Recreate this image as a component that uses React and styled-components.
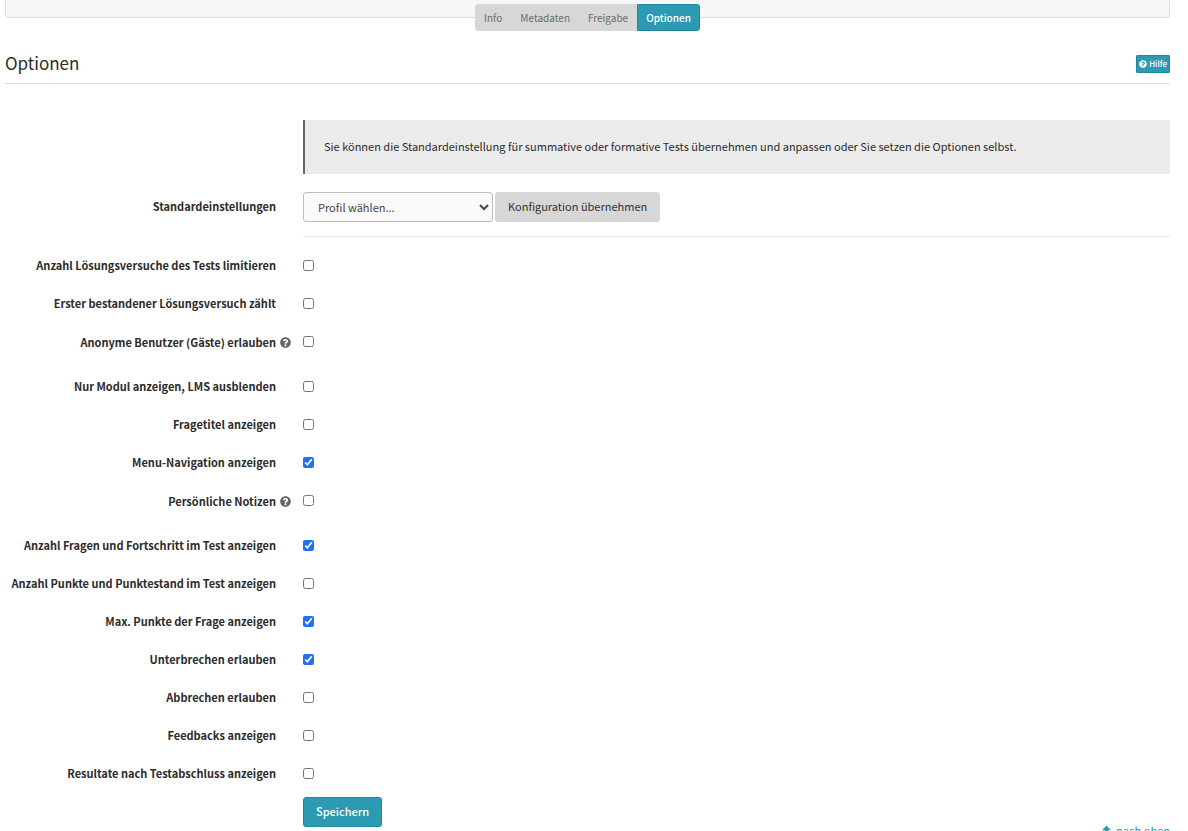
import React from 'react';
import styled, { createGlobalStyle, css } from 'styled-components';
import { FaQuestionCircle } from 'react-icons/fa';

const GlobalStyle = createGlobalStyle`
  *, *::before, *::after { box-sizing: border-box; }
  html { scrollbar-width: none; }
  body {
    margin: 0;
    background: #fff;
    color: #2b2b2b;
    font-family: "Noto Sans CJK SC", "Source Sans Pro", "Liberation Sans", sans-serif;
    font-size: 11px;
    line-height: 18px;
  }
  button, input, select { font: inherit; margin: 0; }
`;

const Page = styled.div`
  padding: 0 18px 16px 5px;
`;

const Panel = styled.div`
  height: 18px;
  background: #f7f7f7;
  border: 1px solid #dedede;
  border-top: 0;
  border-radius: 0 0 4px 4px;
`;

const Tabs = styled.nav`
  display: flex;
  justify-content: center;
  margin-top: -14px;
`;

const Tab = styled.button`
  height: 27px;
  padding: 0 8px;
  border: 1px solid #d7d7d7;
  background: #d7d7d7;
  color: #6b6b6b;
  font-size: 10px;
  line-height: 15px;
  &:first-child { border-radius: 3px 0 0 3px; }
  &:last-child { border-radius: 0 3px 3px 0; }
  ${({ $active }) => $active && css`
    background: #2c9ab3;
    border-color: #22869d;
    color: #fff;
    font-weight: 500;
  `}
`;

const Header = styled.header`
  display: flex;
  justify-content: space-between;
  align-items: center;
  margin-top: 13px;
  height: 40px;
  border-bottom: 1px solid #dedede;
`;

const Title = styled.h1`
  margin: 0;
  padding-bottom: 2px;
  font-size: 17px;
  font-weight: 400;
  line-height: 24px;
`;

const HelpButton = styled.button`
  display: flex;
  align-items: center;
  gap: 2px;
  height: 18px;
  padding: 0 2px;
  border: 1px solid #22869d;
  border-radius: 1px;
  background: #2c9ab3;
  color: #fff;
  font-size: 8px;
  font-weight: 500;
  line-height: 12px;
`;

const Form = styled.form`
  margin-top: 36px;
`;

const Row = styled.div`
  display: grid;
  grid-template-columns: 298px 1fr;
`;

const Field = styled.div`
  grid-column: 2;
`;

const Notice = styled.p`
  margin: 0 0 18px;
  padding: 17px 19px 19px;
  border-left: 2px solid #666;
  background: #ebebeb;
`;

const LabelCell = styled.div`
  display: flex;
  justify-content: flex-end;
  align-items: center;
  gap: 4px;
  height: ${({ $help }) => ($help ? 30 : 28)}px;
  padding-right: ${({ $help }) => ($help ? 12 : 27)}px;
  font-weight: bold;
  white-space: nowrap;
`;

const HelpIcon = styled.button`
  display: flex;
  padding: 0;
  border: 0;
  background: none;
  color: #666;
  font-size: 11px;
`;

const Controls = styled.div`
  display: flex;
  gap: 2px;
  padding-bottom: 14px;
  border-bottom: 1px solid #ebebeb;
`;

const Select = styled.select`
  width: 190px;
  height: 30px;
  padding: 0 10px;
  border: 1px solid #bdbdbd;
  border-radius: 3px;
  background: #fafafa;
  color: #444;
`;

const Button = styled.button`
  height: 30px;
  padding: 0 12px 2px;
  border: 1px solid ${({ $primary }) => ($primary ? '#22869d' : '#d7d7d7')};
  border-radius: 3px;
  background: ${({ $primary }) => ($primary ? '#2c9ab3' : '#d7d7d7')};
  color: ${({ $primary }) => ($primary ? '#fff' : '#333')};
  font-weight: ${({ $primary }) => ($primary ? 500 : 400)};
`;

const Options = styled.div`
  margin-top: 14px;
`;

const OptionRow = styled(Row)`
  height: ${({ $help }) => ($help ? 45 : 38)}px;
  align-items: start;
`;

const CheckCell = styled.div`
  display: flex;
  align-items: center;
  height: 28px;
`;

const Checkbox = styled.input`
  width: 11px;
  height: 11px;
  accent-color: #2470f5;
`;

const Footer = styled.footer`
  display: flex;
  justify-content: flex-end;
  margin-top: -6px;
`;

const TopLink = styled.a`
  display: flex;
  align-items: center;
  gap: 5px;
  color: #2c9ab3;
  text-decoration: none;
`;

const options = [
  { id: 'limit', label: 'Anzahl Lösungsversuche des Tests limitieren' },
  { id: 'first', label: 'Erster bestandener Lösungsversuch zählt' },
  { id: 'guests', label: 'Anonyme Benutzer (Gäste) erlauben', help: true },
  { id: 'module', label: 'Nur Modul anzeigen, LMS ausblenden' },
  { id: 'titles', label: 'Fragetitel anzeigen' },
  { id: 'menu', label: 'Menu-Navigation anzeigen', checked: true },
  { id: 'notes', label: 'Persönliche Notizen', help: true },
  { id: 'progress', label: 'Anzahl Fragen und Fortschritt im Test anzeigen', checked: true },
  { id: 'score', label: 'Anzahl Punkte und Punktestand im Test anzeigen' },
  { id: 'max', label: 'Max. Punkte der Frage anzeigen', checked: true },
  { id: 'suspend', label: 'Unterbrechen erlauben', checked: true },
  { id: 'cancel', label: 'Abbrechen erlauben' },
  { id: 'feedback', label: 'Feedbacks anzeigen' },
  { id: 'results', label: 'Resultate nach Testabschluss anzeigen' },
];

function UpIcon() {
  return (
    <svg width="9" height="10" viewBox="0 0 9 10" fill="currentColor" aria-hidden="true">
      <path d="M4.5 0.5 9 5.2H6.2V10H2.8V5.2H0Z" />
    </svg>
  );
}

function Option({ id, label, help, checked }) {
  return (
    <OptionRow $help={help}>
      <LabelCell $help={help}>
        <label htmlFor={id}>{label}</label>
        {help && (
          <HelpIcon type="button" aria-label="Hilfe">
            <FaQuestionCircle />
          </HelpIcon>
        )}
      </LabelCell>
      <CheckCell>
        <Checkbox id={id} type="checkbox" defaultChecked={checked} />
      </CheckCell>
    </OptionRow>
  );
}

export default function App() {
  return (
    <>
      <GlobalStyle />
      <Page>
        <Panel />
        <Tabs>
          <Tab type="button">Info</Tab>
          <Tab type="button">Metadaten</Tab>
          <Tab type="button">Freigabe</Tab>
          <Tab type="button" $active>Optionen</Tab>
        </Tabs>
        <Header>
          <Title>Optionen</Title>
          <HelpButton type="button">
            <FaQuestionCircle />
            Hilfe
          </HelpButton>
        </Header>
        <Form onSubmit={(e) => e.preventDefault()}>
          <Row>
            <Field>
              <Notice>
                Sie können die Standardeinstellung für summative oder formative Tests übernehmen und
                anpassen oder Sie setzen die Optionen selbst.
              </Notice>
            </Field>
          </Row>
          <Row>
            <LabelCell>
              <label htmlFor="profile">Standardeinstellungen</label>
            </LabelCell>
            <Controls>
              <Select id="profile">
                <option>Profil wählen...</option>
              </Select>
              <Button type="button">Konfiguration übernehmen</Button>
            </Controls>
          </Row>
          <Options>
            {options.map((option) => (
              <Option key={option.id} {...option} />
            ))}
          </Options>
          <Row>
            <Field>
              <Button type="submit" $primary>Speichern</Button>
            </Field>
          </Row>
        </Form>
        <Footer>
          <TopLink href="#">
            <UpIcon />
            nach oben
          </TopLink>
        </Footer>
      </Page>
    </>
  );
}
